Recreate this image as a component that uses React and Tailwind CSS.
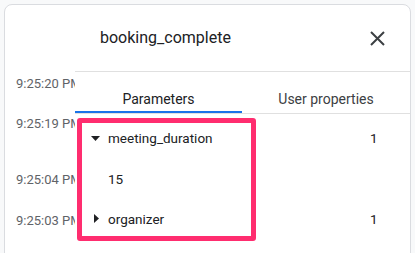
import React from "react";

const font = { fontFamily: "Roboto, 'Liberation Sans', sans-serif" };

function Row({ caret, label, value, h }) {
  return (
    <div className={`flex items-center ${h}`}>
      <div className="w-[33px] flex justify-end pr-[8px]">
        {caret === "down" && (
          <svg width="9" height="5" viewBox="0 0 9 5">
            <path d="M0 0 L9 0 L4.5 5 Z" fill="#202124" />
          </svg>
        )}
        {caret === "right" && (
          <svg width="5" height="9" viewBox="0 0 5 9" className="mr-[1px]">
            <path d="M0 0 L5 4.5 L0 9 Z" fill="#202124" />
          </svg>
        )}
      </div>
      <div className="flex-1 text-[13.5px] leading-[20px] text-[#202124]">{label}</div>
      <div className="w-[40px] text-[13.5px] leading-[20px] text-[#202124]">{value}</div>
    </div>
  );
}

export default function App() {
  return (
    <div className="w-[415px] h-[253px] bg-[#f8f9fa] overflow-hidden pt-[4px] pl-[4px]" style={font}>
      <div className="w-[407px] h-[270px] bg-white border border-[#dadce0] rounded-[8px] flex flex-col">
        <div className="h-[66px] flex items-center pl-[95px] pr-[25px] shrink-0">
          <div className="flex-1 text-[16px] leading-[24px] text-[#202124]">booking_complete</div>
          <svg width="15" height="15" viewBox="0 0 15 15">
            <path d="M1 1 L14 14 M14 1 L1 14" stroke="#3c4043" strokeWidth="2" />
          </svg>
        </div>
        <div className="relative flex-1">
          <div className="flex flex-col pl-[11px] pt-[3px] text-[13px] leading-[20px] text-[#5f6368]">
            <div>9:25:20 PM</div>
            <div className="mt-[20px]">9:25:19 PM</div>
            <div className="mt-[36px]">9:25:04 PM</div>
            <div className="mt-[21px]">9:25:03 PM</div>
          </div>
          <div className="absolute left-[70px] top-0 right-0 bottom-0 bg-white border-t border-[#e0e0e0]">
            <div className="flex border-b border-[#e0e0e0] h-[42px]">
              <div className="w-[167px] flex flex-col items-center pt-[17px]">
                <div className="text-[14px] leading-[20px] text-[#202124]">Parameters</div>
                <div className="mt-[2px] h-[2px] self-stretch bg-[#1a73e8]" />
              </div>
              <div className="flex-1 flex flex-col items-center pt-[17px]">
                <div className="text-[14px] leading-[20px] text-[#3c4043]">User properties</div>
              </div>
            </div>
            <div className="pt-[4px]">
              <Row caret="down" label="meeting_duration" value="1" h="h-[40px]" />
              <Row label="15" value="" h="h-[41px]" />
              <Row caret="right" label="organizer" value="1" h="h-[39px]" />
            </div>
            <div className="absolute left-[2px] top-[46px] w-[179px] h-[123px] border-[5px] border-[#ff2d6f] rounded-[3px]" />
          </div>
        </div>
      </div>
    </div>
  );
}
